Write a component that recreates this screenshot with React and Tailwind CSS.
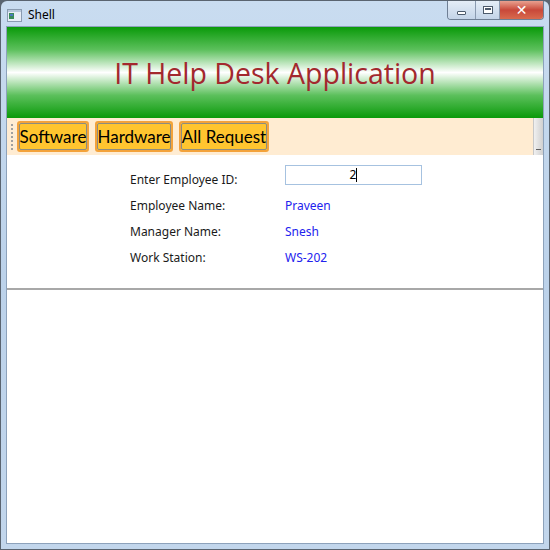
import React from "react";

// ─── Title bar ────────────────────────────────────────────────────────────────

function TitleBar() {
  return (
    <div className="flex h-[25px] items-start justify-between">
      <div className="flex items-center gap-[6px] pl-[6px] pt-[5px]">
        <svg width="15" height="13" viewBox="0 0 15 13">
          <rect x="0.5" y="0.5" width="14" height="12" fill="#e8eef6" stroke="#8a9bb0" />
          <rect x="1" y="1" width="13" height="2" fill="#b8c8dc" />
          <rect x="2" y="4" width="5" height="6" fill="#3a8a5a" />
          <rect x="3" y="5" width="3" height="2" fill="#4a7ac0" />
        </svg>
        <span className="text-[12px] text-black [font-family:'Noto_Sans',sans-serif]">Shell</span>
      </div>
      <div className="mr-[5px] flex h-[19px] overflow-hidden rounded-b-[4px] border border-t-0 border-[#6f7f94]">
        <div className="flex w-[28px] items-center justify-center border-r border-[#8a9ab0] bg-gradient-to-b from-[#e4edf7] to-[#c4d4e8]">
          <div className="mt-[6px] h-[4px] w-[9px] rounded-[1px] border border-[#4c5a6c] bg-white" />
        </div>
        <div className="flex w-[24px] items-center justify-center border-r border-[#8a9ab0] bg-gradient-to-b from-[#e4edf7] to-[#c4d4e8]">
          <div className="h-[8px] w-[10px] border border-[#4c5a6c] bg-white">
            <div className="m-[1px] h-[2px] border border-[#4c5a6c]" />
          </div>
        </div>
        <div className="flex w-[43px] items-center justify-center bg-gradient-to-b from-[#e8a090] via-[#c8483a] to-[#d86a4e]">
          <span className="text-[14px] font-bold leading-none text-white [font-family:'DejaVu_Sans',sans-serif]">✕</span>
        </div>
      </div>
    </div>
  );
}

// ─── Toolbar button ───────────────────────────────────────────────────────────

function ToolButton({ label, width }) {
  return (
    <div
      className={`flex h-[31px] items-center justify-center rounded-[3px] border-2 border-[#f3a23a] bg-[#ffc52f] ${width}`}
    >
      <div className="flex h-full w-full items-center justify-center rounded-[2px] border border-[#8c8c80]">
        <span className="whitespace-nowrap text-[17px] leading-none text-black [font-family:Lato,sans-serif]">{label}</span>
      </div>
    </div>
  );
}

// ─── Form row ─────────────────────────────────────────────────────────────────

function Row({ label, children }) {
  return (
    <div className="flex h-[26px] items-center">
      <div className="w-[155px] text-[12px] text-[#1a1a1a]">{label}</div>
      {children}
    </div>
  );
}

export default function App() {
  return (
    <div className="h-[550px] w-[550px] overflow-hidden bg-[#5a6470] p-[1px] [font-family:'Noto_Sans',sans-serif]">
      <div className="flex h-full w-full flex-col rounded-t-[6px] bg-gradient-to-b from-[#c9dcf0] via-[#bcd2ea] to-[#c2d6ec]">
        <TitleBar />
        <div className="mx-[5px] mb-[5px] flex flex-1 flex-col border border-[#8da2bb] bg-white">
          {/* Banner */}
          <div className="flex h-[91px] items-center justify-center bg-[linear-gradient(to_bottom,#0a9a0a_0%,#5cc05c_25%,#ffffff_50%,#5cc05c_75%,#0a9a0a_100%)]">
            <h1 className="mt-[1px] text-[28.5px] leading-none text-[#a3282e] [font-family:'Open_Sans',sans-serif]">
              IT Help Desk Application
            </h1>
          </div>

          {/* Toolbar */}
          <div className="flex h-[37px] items-center bg-[#ffecd2] pl-[4px]">
            <div className="mr-[4px] flex h-[28px] flex-col justify-between py-[1px]">
              {[0, 1, 2, 3, 4, 5, 6].map((i) => (
                <div key={i} className="h-[2px] w-[2px] bg-[#a0a0a0]" />
              ))}
            </div>
            <div className="flex gap-[6px]">
              <ToolButton label="Software" width="w-[72px]" />
              <ToolButton label="Hardware" width="w-[78px]" />
              <ToolButton label="All Request" width="w-[90px]" />
            </div>
            <div className="ml-auto flex h-full w-[10px] items-end justify-center border-l border-[#c8c8c8] bg-gradient-to-r from-[#f0f0f0] to-[#d0d0d0] pb-[3px]">
              <div className="h-[3px] w-[5px] border-t border-[#606060]" />
            </div>
          </div>

          {/* Form */}
          <div className="flex h-[135px] flex-col border-b-2 border-[#a8a8a8] pl-[123px] pt-[12px]">
            <Row label="Enter Employee ID:">
              <div className="flex h-[20px] w-[137px] -translate-y-[5px] items-center justify-center border border-[#a6c2e0] bg-white">
                <span className="text-[12px] text-black">2</span>
                <span className="h-[14px] w-[1px] bg-black" />
              </div>
            </Row>
            <Row label="Employee Name:">
              <span className="text-[12px] text-[#2222ee]">Praveen</span>
            </Row>
            <Row label="Manager Name:">
              <span className="text-[12px] text-[#2222ee]">Snesh</span>
            </Row>
            <Row label="Work Station:">
              <span className="text-[12px] text-[#2222ee]">WS-202</span>
            </Row>
          </div>

          <div className="flex-1 bg-white" />
        </div>
      </div>
    </div>
  );
}
